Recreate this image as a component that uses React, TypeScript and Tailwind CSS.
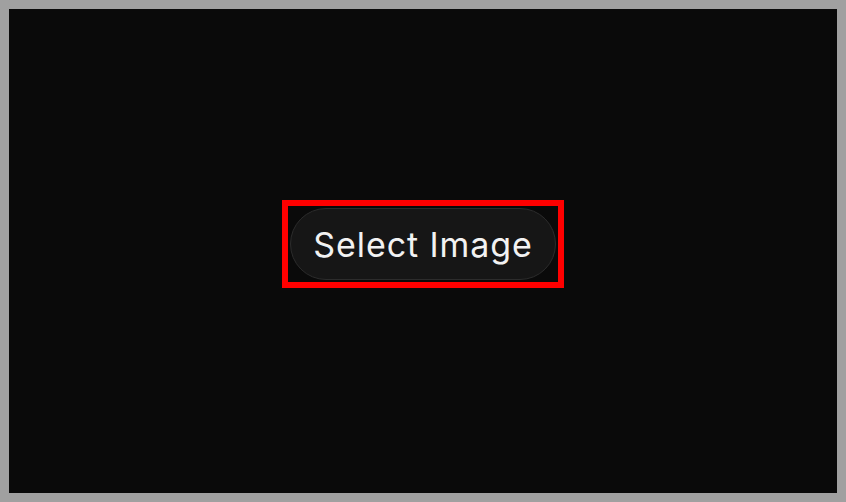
export default function App() {
  return (
    <div className="min-h-screen bg-[#a0a0a0] p-[9px]">
      <div className="flex h-[484px] items-center justify-center bg-[#0a0a0a] pb-[14px]">
        <div className="border-[6px] border-[#ff0000] p-[2px]">
          <button
            type="button"
            className="flex h-[72px] w-[266px] items-center justify-center rounded-full border border-[#2c2c2c] bg-[#161616] text-[34px] tracking-[0.9px] text-[#f2f2f2]"
            style={{ fontFamily: 'Inter, "Noto Sans", sans-serif' }}
          >
            Select Image
          </button>
        </div>
      </div>
    </div>
  );
}
